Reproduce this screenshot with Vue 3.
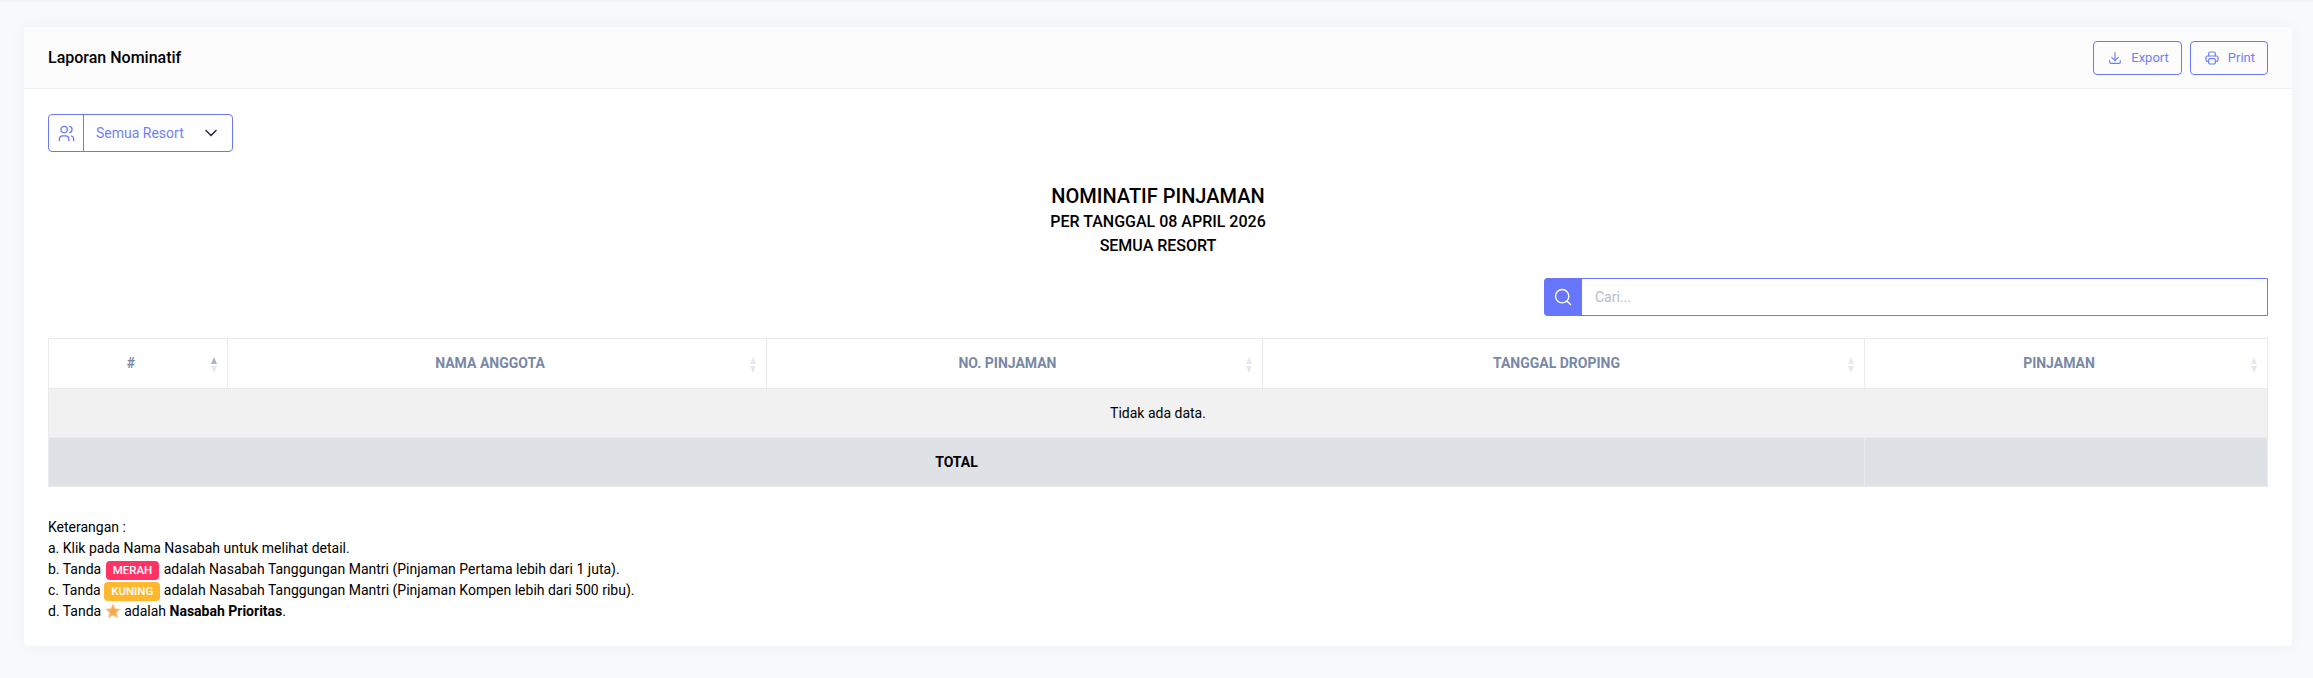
<script setup>
const columns = [
  { label: '#', width: '179px', active: true },
  { label: 'NAMA ANGGOTA', width: '539px' },
  { label: 'NO. PINJAMAN', width: '496px' },
  { label: 'TANGGAL DROPING', width: '602px' },
  { label: 'PINJAMAN', width: 'auto' }
]
</script>

<template>
  <div class="page">
    <div class="topline"></div>
    <section class="card">
      <header class="card-head">
        <h1>Laporan Nominatif</h1>
        <div class="actions">
          <button class="btn">
            <svg width="16" height="16" viewBox="0 0 24 24" fill="none" stroke="currentColor" stroke-width="1.8" stroke-linecap="round" stroke-linejoin="round">
              <path d="M4 16v2a2 2 0 0 0 2 2h12a2 2 0 0 0 2-2v-2" />
              <path d="M7 11l5 5 5-5" />
              <path d="M12 4v12" />
            </svg>
            <span>Export</span>
          </button>
          <button class="btn">
            <svg width="16" height="16" viewBox="0 0 24 24" fill="none" stroke="currentColor" stroke-width="1.8" stroke-linecap="round" stroke-linejoin="round">
              <path d="M17 17h2a2 2 0 0 0 2-2v-4a2 2 0 0 0-2-2H5a2 2 0 0 0-2 2v4a2 2 0 0 0 2 2h2" />
              <path d="M17 9V5a2 2 0 0 0-2-2H9a2 2 0 0 0-2 2v4" />
              <rect x="7" y="13" width="10" height="8" rx="2" />
            </svg>
            <span>Print</span>
          </button>
        </div>
      </header>

      <div class="card-body">
        <div class="select">
          <span class="select-icon">
            <svg width="19" height="19" viewBox="0 0 24 24" fill="none" stroke="currentColor" stroke-width="1.6" stroke-linecap="round" stroke-linejoin="round">
              <circle cx="9" cy="7" r="4" />
              <path d="M3 21v-2a4 4 0 0 1 4-4h4a4 4 0 0 1 4 4v2" />
              <path d="M16 3.13a4 4 0 0 1 0 7.75" />
              <path d="M21 21v-2a4 4 0 0 0-3-3.85" />
            </svg>
          </span>
          <span class="select-value">
            <span>Semua Resort</span>
            <svg width="20" height="20" viewBox="0 0 24 24" fill="none" stroke="#2e3440" stroke-width="2" stroke-linecap="round" stroke-linejoin="round">
              <path d="M6 9l6 6 6-6" />
            </svg>
          </span>
        </div>

        <div class="report-title">
          <h2>NOMINATIF PINJAMAN</h2>
          <p>PER TANGGAL 08 APRIL 2026</p>
          <p>SEMUA RESORT</p>
        </div>

        <div class="search-row">
          <div class="search">
            <span class="search-icon">
              <svg width="20" height="20" viewBox="0 0 24 24" fill="none" stroke="#fff" stroke-width="1.7" stroke-linecap="round" stroke-linejoin="round">
                <circle cx="11" cy="11" r="8" />
                <path d="M21 21l-4.3-4.3" />
              </svg>
            </span>
            <span class="search-input">Cari...</span>
          </div>
        </div>

        <table class="table">
          <colgroup>
            <col v-for="c in columns" :key="c.label" :style="{ width: c.width }" />
          </colgroup>
          <thead>
            <tr>
              <th v-for="c in columns" :key="c.label">
                {{ c.label }}
                <span class="sort">
                  <i class="up" :class="{ on: c.active }"></i>
                  <i class="down"></i>
                </span>
              </th>
            </tr>
          </thead>
          <tbody>
            <tr class="empty"><td colspan="5">Tidak ada data.</td></tr>
          </tbody>
          <tfoot>
            <tr>
              <td colspan="4">TOTAL</td>
              <td></td>
            </tr>
          </tfoot>
        </table>

        <div class="notes">
          <div>Keterangan :</div>
          <div>a. Klik pada Nama Nasabah untuk melihat detail.</div>
          <div>b. Tanda <span class="badge red">MERAH</span> adalah Nasabah Tanggungan Mantri (Pinjaman Pertama lebih dari 1 juta).</div>
          <div>c. Tanda <span class="badge yellow">KUNING</span> adalah Nasabah Tanggungan Mantri (Pinjaman Kompen lebih dari 500 ribu).</div>
          <div>d. Tanda
            <svg class="star" width="16" height="16" viewBox="0 0 24 24">
              <defs>
                <radialGradient id="starFill" cx="50%" cy="55%" r="55%">
                  <stop offset="0%" stop-color="#f6a23e" />
                  <stop offset="100%" stop-color="#f9bd78" />
                </radialGradient>
              </defs>
              <path d="M12 1.500l3.200 7 7.600.8-5.700 5.100 1.600 7.600L12 18.200 5.300 22l1.600-7.600L1.200 9.300l7.600-.8z" fill="url(#starFill)" stroke="#f8c48c" stroke-width="1" stroke-linejoin="round" />
            </svg>
            adalah <b>Nasabah Prioritas</b>.</div>
        </div>
      </div>
    </section>
  </div>
</template>

<style scoped>
.page {
  position: relative;
  height: 678px;
  box-sizing: border-box;
  padding: 27px 21px 0 24px;
  background: #f8f9fb;
  font-family: Roboto, "Liberation Sans", sans-serif;
  color: #000;
}
.topline {
  position: absolute;
  top: 0;
  left: 0;
  right: 0;
  height: 3px;
  background: linear-gradient(#eceef2, #f8f9fb);
}
.card {
  position: relative;
  height: 619px;
  background: #fff;
  border-radius: 4px;
  box-shadow: 0 0 20px rgba(40, 50, 90, 0.035);
}
.card-head {
  height: 62px;
  box-sizing: border-box;
  padding: 0 24px;
  display: flex;
  align-items: center;
  justify-content: space-between;
  background: #fcfcfd;
  border-bottom: 1px solid #f0f1f4;
  border-radius: 4px 4px 0 0;
}
h1 {
  margin: 0;
  font-size: 16px;
  font-weight: 500;
}
.actions {
  display: flex;
  gap: 8px;
}
.btn {
  height: 34px;
  box-sizing: border-box;
  display: flex;
  align-items: center;
  gap: 8px;
  padding: 0 12px 0 13px;
  background: transparent;
  border: 1px solid #6a78f5;
  border-radius: 4px;
  color: #717ff7;
  font: 400 13px Roboto, sans-serif;
}
.card-body {
  padding: 25px 24px 0;
}
.select {
  width: 185px;
  height: 38px;
  box-sizing: border-box;
  display: flex;
  border: 1px solid #6a78f5;
  border-radius: 4px;
  color: #717ff7;
  font-size: 14px;
}
.select-icon {
  width: 35px;
  box-sizing: border-box;
  display: flex;
  align-items: center;
  justify-content: center;
  border-right: 1px solid #6a78f5;
  color: #6a78f5;
}
.select-value {
  flex: 1;
  display: flex;
  align-items: center;
  justify-content: space-between;
  padding: 0 11px 0 12px;
}
.report-title {
  margin-top: 31px;
  text-align: center;
}
.report-title h2 {
  margin: 0;
  font-size: 20px;
  line-height: 27px;
  font-weight: 500;
}
.report-title p {
  margin: 0;
  font-size: 16px;
  line-height: 23.5px;
  font-weight: 500;
}
.search-row {
  display: flex;
  justify-content: flex-end;
  margin-top: 21px;
}
.search {
  width: 724px;
  height: 38px;
  box-sizing: border-box;
  display: flex;
  border: 1px solid #6a78f5;
  border-radius: 4px 0 0 4px;
}
.search-icon {
  width: 38px;
  margin: -1px 0 -1px -1px;
  display: flex;
  align-items: center;
  justify-content: center;
  background: #6776fb;
  border-radius: 4px 0 0 4px;
}
.search-input {
  padding-left: 13px;
  align-self: center;
  font-size: 14px;
  color: #b5bccd;
}
.table {
  width: 100%;
  margin-top: 22px;
  table-layout: fixed;
  border-collapse: collapse;
  font-size: 14px;
}
.table th {
  position: relative;
  height: 50px;
  box-sizing: border-box;
  padding: 0 14px 2px 0;
  border: 1px solid #e9ecef;
  background: #fff;
  color: #7888a6;
  font-size: 14px;
  font-weight: 700;
  text-align: center;
}
.sort {
  position: absolute;
  right: 10px;
  top: 18px;
  display: flex;
  flex-direction: column;
  gap: 2px;
}
.sort i {
  display: block;
  width: 0;
  height: 0;
  border-left: 3.5px solid transparent;
  border-right: 3.5px solid transparent;
}
.up {
  border-bottom: 7px solid #e5e8f0;
}
.up.on {
  border-bottom-color: #aab2c8;
}
.down {
  border-top: 7px solid #e5e8f0;
}
.empty td {
  height: 49px;
  box-sizing: border-box;
  padding-bottom: 1px;
  border: 1px solid #e9ecef;
  border-bottom: 0;
  background: #f1f1f1;
  text-align: center;
}
tfoot td {
  height: 49px;
  box-sizing: border-box;
  padding-bottom: 1px;
  border: 1px solid #e9ecef;
  background: #dee1e6;
  font-weight: 700;
  text-align: center;
}
.notes {
  margin-top: 30px;
  font-size: 14px;
  line-height: 21px;
}
.badge {
  display: inline-block;
  box-sizing: border-box;
  height: 19px;
  padding: 0 7px;
  border-radius: 4px;
  color: #fff;
  font-size: 11.5px;
  font-weight: 500;
  line-height: 19px;
  vertical-align: 0;
}
.red {
  background: #ff3366;
  margin: 0 1px;
}
.yellow {
  background: #ffb72e;
}
.star {
  vertical-align: -3px;
}
b {
  font-weight: 700;
}
</style>
